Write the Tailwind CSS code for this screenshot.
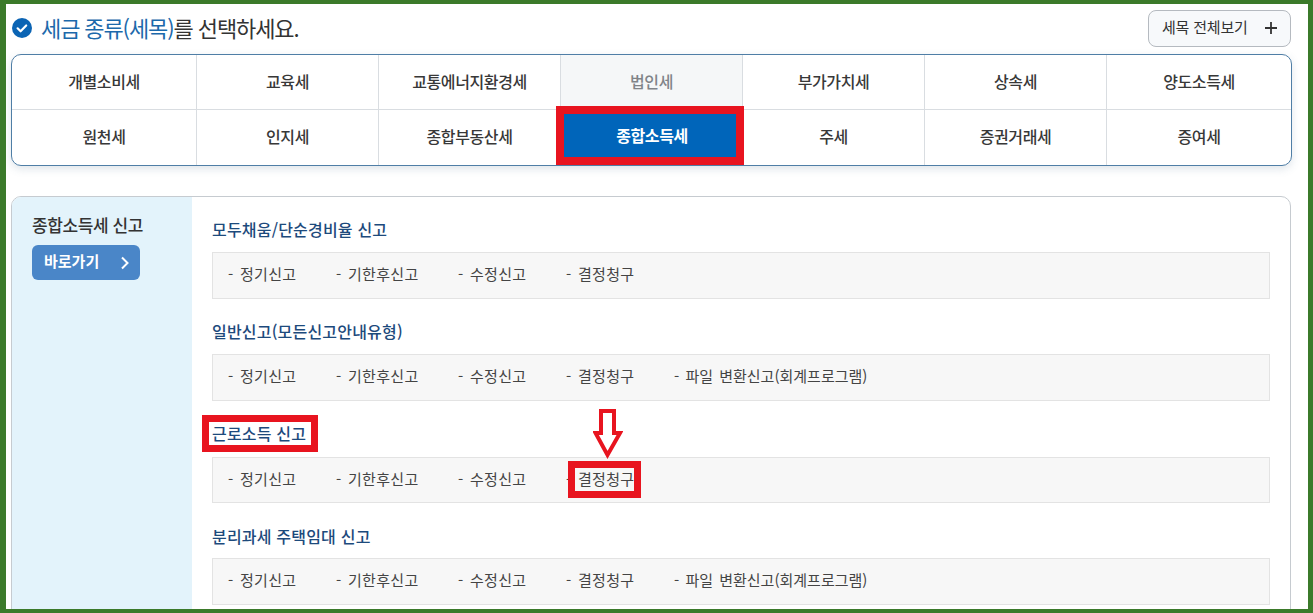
<!DOCTYPE html>
<html lang="ko">
<head>
    <meta charset="UTF-8">
    <title>세금 종류 선택</title>
    <script src="https://cdn.jsdelivr.net/npm/@tailwindcss/browser@4"></script>
</head>
<body class="bg-white overflow-hidden font-['Noto_Sans_CJK_KR','Noto_Sans',sans-serif]">
<div class="relative w-[1313px] h-[613px] overflow-hidden bg-white border-t-4 border-l-[6px] border-r-[5px] border-b-4 border-[#3b7a2a]">

    <!-- 제목 -->
    <div class="flex items-center justify-between h-[50px] pl-[6px] pr-[17px] pb-[2px]">
        <div class="flex items-center gap-[9px]">
            <svg class="w-5 h-5" viewBox="0 0 20 20">
                <circle cx="10" cy="10" r="10" fill="#0b64b4"/>
                <path d="M5.6 10.3l3 3 5.6-5.8" fill="none" stroke="#fff" stroke-width="2.2" stroke-linecap="round" stroke-linejoin="round"/>
            </svg>
            <h1 class="text-[22px] leading-none tracking-[-1.1px] text-[#333] pb-[2px]"><span class="text-[#1c69ab]">세금 종류(세목)</span>를 선택하세요.</h1>
        </div>
        <button class="flex items-center justify-between w-[143px] h-[37px] pl-[13px] pr-[13px] pb-[2px] bg-[#f7f9fb] border border-[#b5bac0] rounded-lg text-[15px] text-[#333] tracking-[-0.2px]">
            <span>세목 전체보기</span>
            <svg class="w-3 h-3 mt-[2px]" viewBox="0 0 12 12"><path d="M6 0v12M0 6h12" stroke="#333" stroke-width="1.8"/></svg>
        </button>
    </div>

    <!-- 세목 표 -->
    <div class="grid grid-cols-[185px_182px_182px_182px_182px_182px_1fr] grid-rows-[55px_55px] w-[1281px] h-[112px] ml-[5px] border border-[#4f7ea6] rounded-[10px] shadow-[0_3px_8px_rgba(80,110,140,0.18)] text-[16px] font-medium text-[#383838] tracking-[-0.4px] bg-white">
        <div class="flex items-center justify-center pb-[2px] border-r border-b border-[#d9dde1] rounded-tl-[10px]">개별소비세</div>
        <div class="flex items-center justify-center pb-[2px] border-r border-b border-[#d9dde1]">교육세</div>
        <div class="flex items-center justify-center pb-[2px] border-r border-b border-[#d9dde1]">교통에너지환경세</div>
        <div class="flex items-center justify-center pb-[2px] border-r border-b border-[#d9dde1] bg-[#f5f7f8] text-[#808488]">법인세</div>
        <div class="flex items-center justify-center pb-[2px] border-r border-b border-[#d9dde1]">부가가치세</div>
        <div class="flex items-center justify-center pb-[2px] border-r border-b border-[#d9dde1]">상속세</div>
        <div class="flex items-center justify-center pb-[2px] border-b border-[#d9dde1] rounded-tr-[10px]">양도소득세</div>
        <div class="flex items-center justify-center pb-[4px] border-r border-[#d9dde1]">원천세</div>
        <div class="flex items-center justify-center pb-[4px] border-r border-[#d9dde1]">인지세</div>
        <div class="flex items-center justify-center pb-[4px] border-r border-[#d9dde1]">종합부동산세</div>
        <div class="flex items-center justify-center pb-[1px] pl-[4px] bg-[#0065ba] text-white font-bold border-8 border-[#e8141f] -mt-[4px] -ml-[5px] -mr-[1px] z-10">종합소득세</div>
        <div class="flex items-center justify-center pb-[4px] border-r border-[#d9dde1]">주세</div>
        <div class="flex items-center justify-center pb-[4px] border-r border-[#d9dde1]">증권거래세</div>
        <div class="flex items-center justify-center pb-[4px]">증여세</div>
    </div>

    <!-- 신고 패널 -->
    <div class="flex w-[1280px] h-[420px] ml-[5px] mt-[30px] border border-[#c6cbd0] rounded-t-[10px] overflow-hidden">
        <div class="w-[180px] shrink-0 bg-[#e3f3fb] pt-[18px] pl-[20px]">
            <div class="text-[17px] font-medium leading-[20px] text-[#333] tracking-[-0.4px]">종합소득세 신고</div>
            <div class="flex items-center justify-between w-[108px] h-[35px] mt-[10px] pl-[12px] pr-[10px] pb-[2px] rounded-md bg-[#4a86c8] text-white text-[15px] font-bold">
                <span>바로가기</span>
                <svg class="w-[10px] h-[14px] mt-[2px]" viewBox="0 0 10 14"><path d="M2 1.5L7.5 7 2 12.5" fill="none" stroke="#fff" stroke-width="2"/></svg>
            </div>
        </div>

        <div class="flex-1 pl-[20px] pt-[20px] text-[15px] tracking-[0.3px] [word-spacing:2px]">
            <div class="mb-[20px]">
                <h2 class="h-[24px] leading-[24px] text-[16px] font-medium text-[#1d4a7c] tracking-[0.2px] [word-spacing:0]">모두채움/단순경비율 신고</h2>
                <div class="flex items-center h-[47px] mt-[11px] w-[1058px] pl-[15px] pb-[2px] bg-[#f7f7f7] border border-[#e3e3e3] text-[#444]">
                    <span class="w-[108px]">- 정기신고</span><span class="w-[122px]">- 기한후신고</span><span class="w-[108px]">- 수정신고</span><span class="w-[108px]">- 결정청구</span>
                </div>
            </div>
            <div class="mb-[20px]">
                <h2 class="h-[24px] leading-[24px] text-[16px] font-medium text-[#1d4a7c] tracking-[0.2px] [word-spacing:0]">일반신고(모든신고안내유형)</h2>
                <div class="flex items-center h-[47px] mt-[11px] w-[1058px] pl-[15px] pb-[2px] bg-[#f7f7f7] border border-[#e3e3e3] text-[#444]">
                    <span class="w-[108px]">- 정기신고</span><span class="w-[122px]">- 기한후신고</span><span class="w-[108px]">- 수정신고</span><span class="w-[108px]">- 결정청구</span><span class="tracking-normal">- 파일 변환신고(회계프로그램)</span>
                </div>
            </div>
            <div class="mb-[21px]">
                <h2 class="h-[24px] leading-[24px] text-[16px] font-medium text-[#1d4a7c] tracking-[0.2px] [word-spacing:0]">근로소득 신고</h2>
                <div class="flex items-center h-[46px] mt-[12px] w-[1058px] pl-[15px] pb-[2px] bg-[#f7f7f7] border border-[#e3e3e3] text-[#444]">
                    <span class="w-[108px]">- 정기신고</span><span class="w-[122px]">- 기한후신고</span><span class="w-[108px]">- 수정신고</span><span class="w-[108px]">- 결정청구</span>
                </div>
            </div>
            <div>
                <h2 class="h-[24px] leading-[24px] text-[16px] font-medium text-[#1d4a7c] tracking-[0.2px] [word-spacing:0]">분리과세 주택임대 신고</h2>
                <div class="flex items-center h-[47px] mt-[10px] w-[1058px] pl-[15px] pb-[2px] bg-[#f7f7f7] border border-[#e3e3e3] text-[#444]">
                    <span class="w-[108px]">- 정기신고</span><span class="w-[122px]">- 기한후신고</span><span class="w-[108px]">- 수정신고</span><span class="w-[108px]">- 결정청구</span><span class="tracking-normal">- 파일 변환신고(회계프로그램)</span>
                </div>
            </div>
        </div>
    </div>

    <!-- 빨간 강조 표시 -->
    <div class="absolute left-[196px] top-[411px] w-[116px] h-[37px] border-[7px] border-[#e8141f]"></div>
    <div class="absolute left-[562px] top-[457px] w-[73px] h-[37px] border-[7px] border-[#e8141f]"></div>
    <svg class="absolute left-[587px] top-[405px] w-[30px] h-[52px]" viewBox="0 0 30 52">
        <path d="M8 2h13v22h6L14.5 46 2.5 24H8z" fill="#fff" stroke="#e8141f" stroke-width="4"/>
    </svg>
</div>
</body>
</html>
